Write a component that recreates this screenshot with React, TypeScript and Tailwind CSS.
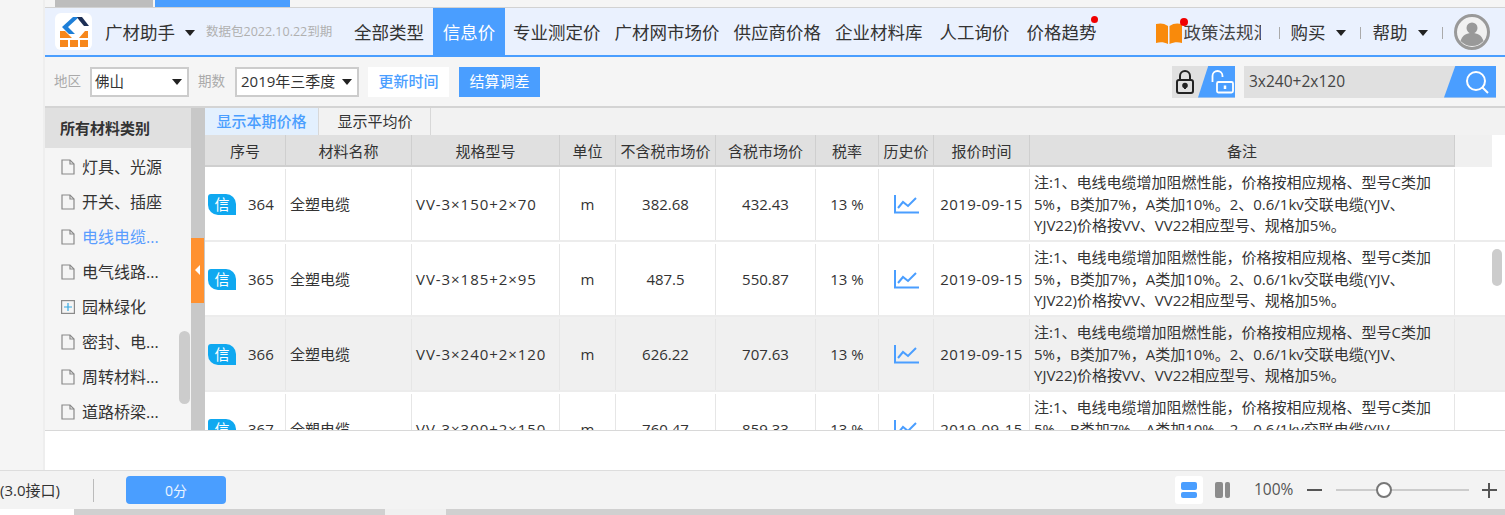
import React from 'react';

const columns = [
  { label: '序号', w: 'w-[81px]' },
  { label: '材料名称', w: 'w-[126px]' },
  { label: '规格型号', w: 'w-[148px]' },
  { label: '单位', w: 'w-[56px]' },
  { label: '不含税市场价', w: 'w-[100px]' },
  { label: '含税市场价', w: 'w-[100px]' },
  { label: '税率', w: 'w-[63px]' },
  { label: '历史价', w: 'w-[55px]' },
  { label: '报价时间', w: 'w-[96px]' },
  { label: '备注', w: 'w-[425px]' },
];

const rows = [
  { no: 364, spec: 'VV-3×150+2×70', price: '382.68', taxed: '432.43', bg: 'bg-white' },
  { no: 365, spec: 'VV-3×185+2×95', price: '487.5', taxed: '550.87', bg: 'bg-white' },
  { no: 366, spec: 'VV-3×240+2×120', price: '626.22', taxed: '707.63', bg: 'bg-[#f0f0f0]' },
  { no: 367, spec: 'VV-3×300+2×150', price: '760.47', taxed: '859.33', bg: 'bg-white' },
];

const navItems = ['专业测定价', '广材网市场价', '供应商价格', '企业材料库'];

const categories = ['灯具、光源', '开关、插座', '电线电缆...', '电气线路...', '园林绿化', '密封、电...', '周转材料...', '道路桥梁...'];

const Caret = () => <span className="block h-0 w-0 border-x-[5px] border-t-[6px] border-x-transparent border-t-[#222]" />;

const FileIcon = () => (
  <svg width="14" height="16" viewBox="0 0 14 16" fill="none" stroke="#8a8a8a" strokeWidth="1.2">
    <path d="M1 1h8l4 4v10H1z" />
    <path d="M9 1v4h4" />
  </svg>
);

const PlusBox = () => (
  <svg width="14" height="14" viewBox="0 0 14 14" fill="none">
    <rect x="0.6" y="0.6" width="12.8" height="12.8" stroke="#8a8a8a" strokeWidth="1.2" />
    <path d="M7 3v8M3 7h8" stroke="#36a9e1" strokeWidth="1.2" />
  </svg>
);

const Logo = () => (
  <div className="-mt-[2px] h-[37px] w-[37px] shrink-0 rounded-md bg-white">
    <svg width="37" height="37" viewBox="0 0 37 37">
      <path d="M7 14 18 4h6L13 14l7 7h-6z" fill="#1e7fd8" />
      <path d="M22 4h5l7 9h-5l-5-6z" fill="#1d2f55" />
      <path d="M5 18h5l7 7H5zM24 25l6-7h3v7z" fill="#f7871a" />
      <path d="M5 27h8v7H5zM15 27h8v7h-8zM25 27h8v7h-8z" fill="#f7871a" />
    </svg>
  </div>
);

const BookIcon = () => (
  <svg width="26" height="23" viewBox="0 0 26 23">
    <path d="M0 3c4-1 8-1 12 2v18c-4-2-8-2-12-1z" fill="#f98a0b" />
    <path d="M13.500 5c4-3 8-3 12.500-2v19c-4-1-8-1-12.500 1z" fill="#f98a0b" />
  </svg>
);

const Avatar = () => (
  <svg width="36" height="36" viewBox="0 0 36 36">
    <circle cx="18" cy="18" r="16.500" fill="#f1f1f1" stroke="#999" strokeWidth="3" />
    <circle cx="18" cy="14" r="5.500" fill="#999" />
    <path d="M6.500 27c2-6 6-8 11.500-8s9.500 2 11.500 8c-3 3-7 5-11.500 5s-8.500-2-11.500-5z" fill="#999" />
  </svg>
);

const LockIcon = ({ open }: { open?: boolean }) =>
  open ? (
    <svg width="24" height="26" viewBox="0 0 24 26" fill="none" stroke="#fff" strokeWidth="1.8">
      <path d="M2.500 14V8a5 5 0 0 1 10 0v1" />
      <rect x="7" y="14" width="16" height="10.500" rx="1.500" />
      <path d="M15 17.500v3.500" strokeWidth="2.500" />
    </svg>
  ) : (
    <svg width="18" height="24" viewBox="0 0 18 24" fill="none" stroke="#222" strokeWidth="2">
      <path d="M4 10V6a5 5 0 0 1 10 0v4" />
      <rect x="1" y="10" width="16" height="13" rx="2" />
      <circle cx="9" cy="15.500" r="1.800" fill="#222" />
      <path d="M9 16v3" />
    </svg>
  );

const ChartIcon = () => (
  <svg width="25" height="19" viewBox="0 0 25 19" fill="none" stroke="#4a9eff">
    <path d="M1 0v17.500h24" strokeWidth="2" />
    <path d="M4 13l5-6 5 4 8-8" strokeWidth="2" />
  </svg>
);

const TableRow = ({ no, spec, price, taxed, bg }: (typeof rows)[number]) => (
  <div className={`flex h-[75px] shrink-0 border-b-2 border-[#ececec] pt-[2px] ${bg}`}>
    <div className="flex w-[81px] items-center border-r border-[#e6e6e6] pl-[3px]">
      <span className="flex h-[21px] w-[28px] items-center justify-center rounded-tl-[3px] rounded-tr-[10px] rounded-bl-[10px] bg-[#0fa8f0] text-[15px] text-white">信</span>
      <span className="ml-[12px]">{no}</span>
    </div>
    <div className="flex w-[126px] items-center border-r border-[#e6e6e6] pl-[4px]">全塑电缆</div>
    <div className="flex w-[148px] items-center border-r border-[#e6e6e6] pl-[4px] tracking-[0.95px]">{spec}</div>
    <div className="flex w-[56px] items-center justify-center border-r border-[#e6e6e6]">m</div>
    <div className="flex w-[100px] items-center justify-center border-r border-[#e6e6e6]">{price}</div>
    <div className="flex w-[100px] items-center justify-center border-r border-[#e6e6e6]">{taxed}</div>
    <div className="flex w-[63px] items-center justify-center border-r border-[#e6e6e6]">13 %</div>
    <div className="flex w-[55px] items-center justify-center border-r border-[#e6e6e6]"><ChartIcon /></div>
    <div className="flex w-[96px] items-center justify-center border-r border-[#e6e6e6] tracking-[0.4px]">2019-09-15</div>
    <div className="flex w-[425px] flex-col justify-center border-r border-[#e6e6e6] pl-[4px] leading-[21.500px] whitespace-nowrap">
      <span>注:1、电线电缆增加阻燃性能，价格按相应规格、型号C类加</span>
      <span>5%，B类加7%，A类加10%。2、0.6/1kv交联电缆(YJV、</span>
      <span>YJV22)价格按VV、VV22相应型号、规格加5%。</span>
    </div>
  </div>
);

export default function App() {
  return (
    <div className="relative flex h-[515px] w-[1505px] flex-col overflow-hidden bg-white font-['Open_Sans','Noto_Sans_CJK_SC',sans-serif] text-[15px] text-[#333]">
      <div className="flex h-[470px] shrink-0">
        <div className="w-[45px] shrink-0 border-r-2 border-[#eeeeee] bg-[#f5f5f5]" />
        <div className="flex min-w-0 flex-1 flex-col">
          {/* window tabs */}
          <div className="flex h-[8px] shrink-0 gap-[2px] border-b border-[#d2d2d2] bg-[#f5f5f5] pl-[10px]">
            <div className="h-[7px] w-[98px] bg-[#bdbdbd]" />
            <div className="h-[7px] w-[135px] bg-[#4a9eff]" />
          </div>

          {/* nav */}
          <div className="flex h-[49px] shrink-0 items-center border-b-2 border-[#4a9eff] bg-[#eaf1fe] pt-[2px] pl-[10px] text-[17.500px] whitespace-nowrap">
            <Logo />
            <span className="ml-[13px]">广材助手</span>
            <span className="ml-[10px]"><Caret /></span>
            <span className="ml-[11px] w-[148px] text-[12.500px] text-[#b0b0b0]">数据包2022.10.22到期</span>
            <span className="w-[79px]">全部类型</span>
            <span className="-mt-[2px] flex w-[72px] items-center justify-center self-stretch bg-[#4a9eff] pt-[2px] text-white">信息价</span>
            <div className="ml-[8px] flex gap-[14px]">
              {navItems.map((n) => <span key={n}>{n}</span>)}
            </div>
            <span className="ml-[17px]">人工询价</span>
            <span className="relative ml-[17px]">
              价格趋势
              <span className="absolute -top-[3px] -right-[1px] h-[7px] w-[7px] rounded-full bg-[#f00000]" />
            </span>
            <span className="relative ml-[59px] flex items-center">
              <BookIcon />
              <span className="absolute top-[-1px] left-[24px] h-[8px] w-[8px] rounded-full bg-[#f00000]" />
              <span className="ml-[2px] w-[77px] overflow-hidden text-[#444]">政策法规汇编</span>
            </span>
            <span className="ml-[18px] h-[12px] w-px bg-[#aaa]" />
            <span className="ml-[11px]">购买</span>
            <span className="ml-[10px]"><Caret /></span>
            <span className="ml-[14px] h-[12px] w-px bg-[#aaa]" />
            <span className="ml-[12px]">帮助</span>
            <span className="ml-[10px]"><Caret /></span>
            <span className="ml-[14px] h-[12px] w-px bg-[#aaa]" />
            <span className="-mt-[2px] ml-[11px]"><Avatar /></span>
          </div>

          {/* filters */}
          <div className="flex h-[51px] shrink-0 items-center border-b-2 border-[#d4d4d4] bg-[#f5f5f5] pl-[9px]">
            <span className="w-[36px] text-[13.500px] text-[#aaa]">地区</span>
            <div className="flex h-[30px] w-[99px] items-center justify-between border-2 border-[#cccccc] bg-white pr-[2px] pl-[3px] text-[14.500px]">
              佛山
              <span className="mr-[3px]"><Caret /></span>
            </div>
            <span className="ml-[9px] w-[37px] text-[13.500px] text-[#aaa]">期数</span>
            <div className="flex h-[30px] w-[124px] items-center justify-between border-2 border-[#cccccc] bg-white pr-[2px] pl-[4px] whitespace-nowrap">
              2019年三季度
              <span className="mr-[3px]"><Caret /></span>
            </div>
            <button className="ml-[9px] h-[30px] w-[81px] bg-white font-medium text-[#4a9eff]">更新时间</button>
            <button className="ml-[10px] h-[30px] w-[81px] bg-[#4a9eff] text-white">结算调差</button>

            <div className="relative ml-[632px] flex h-[32px] w-[63px] items-center overflow-hidden bg-[#e0e0e0] pl-[4px]">
              <LockIcon />
              <span className="absolute top-0 right-0 h-full w-[37px] bg-[#4a9eff] [clip-path:polygon(28%_0,100%_0,100%_100%,0_100%)]" />
              <span className="absolute top-[2px] right-[1px]"><LockIcon open /></span>
            </div>
            <div className="relative ml-[9px] flex h-[32px] w-[252px] items-center overflow-hidden bg-[#e0e0e0] pl-[5px] text-[15.500px] text-[#444]">
              3x240+2x120
              <span className="absolute top-0 right-0 flex h-full w-[52px] items-center justify-end bg-[#4a9eff] pr-[7px] [clip-path:polygon(22%_0,100%_0,100%_100%,0_100%)]">
                <svg width="24" height="24" viewBox="0 0 24 24" fill="none" stroke="#fff" strokeWidth="2">
                  <circle cx="11" cy="11" r="9" />
                  <path d="M17.500 17.500 23 23" />
                </svg>
              </span>
            </div>
          </div>

          {/* body */}
          <div className="flex h-[323px] shrink-0 border-b border-[#d8d8d8]">
            <div className="relative w-[146px] shrink-0 overflow-hidden bg-[#f5f5f5]">
              <div className="flex h-[40px] items-center bg-[#e0e0e0] pl-[15px] font-semibold">所有材料类别</div>
              <div className="pt-[1px] pl-[16px] text-[16px]">
                {categories.map((c) => (
                  <div key={c} className={`flex h-[35px] items-center gap-[7px] ${c === '电线电缆...' ? 'text-[#5a9dff]' : ''}`}>
                    {c === '园林绿化' ? <PlusBox /> : <FileIcon />}
                    {c}
                  </div>
                ))}
              </div>
              <span className="absolute top-[223px] right-[1px] h-[73px] w-[11px] rounded-full bg-[#cccccc]" />
            </div>

            <div className="relative flex w-[14px] shrink-0 items-center bg-[#c8c8c8]">
              <span className="mt-[2px] flex h-[65px] w-[13px] items-center justify-center bg-[#ff9130]">
                <span className="h-0 w-0 border-y-[5px] border-r-[5px] border-y-transparent border-r-white" />
              </span>
            </div>

            <div className="flex min-w-0 flex-1 flex-col bg-white">
              <div className="flex h-[27px] shrink-0 bg-[#f2f2f2]">
                <span className="flex w-[113px] items-center justify-center bg-[#e3f0fe] font-medium text-[#4a9eff]">显示本期价格</span>
                <span className="flex w-[113px] items-center justify-center border-x border-[#d8d8d8] pl-px">显示平均价</span>
              </div>
              <div className="flex h-[32px] shrink-0">
                {columns.map((c) => (
                  <span key={c.label} className={`flex items-center justify-center border-r border-b-2 border-[#cfcfcf] bg-[#e0e0e0] pt-[3px] whitespace-nowrap ${c.w}`}>
                    {c.label}
                  </span>
                ))}
                <span className="w-[37px] border-b-2 border-[#f0f0f0] bg-[#f0f0f0]" />
              </div>
              <div className="flex-1 overflow-hidden">
                {rows.map((r) => <TableRow key={r.no} {...r} />)}
              </div>
            </div>
          </div>
          <div className="flex-1 bg-white" />
        </div>
      </div>

      {/* footer */}
      <div className="flex h-[39px] shrink-0 items-center border-t border-[#dddddd] bg-[#f3f3f3]">
        <span className="w-[93px] whitespace-nowrap">(3.0接口)</span>
        <span className="h-[23px] w-px bg-[#bbb]" />
        <button className="ml-[32px] h-[28px] w-[100px] rounded-[4px] bg-[#4a9eff] text-[14px] text-white/90">0分</button>
        <div className="ml-[949px] flex h-[28px] w-[28px] flex-col items-center justify-center gap-[2px] rounded-[3px] bg-white">
          <span className="h-[8px] w-[16px] rounded-[2px] bg-[#4a9eff]" />
          <span className="h-[6px] w-[16px] rounded-[2px] bg-[#4a9eff]" />
        </div>
        <div className="ml-[12px] flex gap-[2px]">
          <span className="h-[16px] w-[8px] rounded-[2px] bg-[#8c8c8c]" />
          <span className="h-[16px] w-[5px] rounded-[2px] bg-[#8c8c8c]" />
        </div>
        <span className="ml-[24px] w-[39px] text-[15.500px] whitespace-nowrap text-[#555]">100%</span>
        <span className="ml-[14px] h-[2px] w-[15px] bg-[#555]" />
        <div className="relative ml-[14px] h-[2px] w-[133px] bg-[#cccccc]">
          <span className="absolute -top-[7px] left-[40px] h-[16px] w-[16px] rounded-full border-2 border-[#777] bg-white" />
        </div>
        <span className="relative ml-[13px] h-[15px] w-[15px]">
          <span className="absolute top-[6px] left-0 h-[2px] w-[15px] bg-[#555]" />
          <span className="absolute top-0 left-[6px] h-[15px] w-[2px] bg-[#555]" />
        </span>
      </div>

      {/* page scroll strip */}
      <div className="flex h-[6px] shrink-0 bg-[#d0d0d0]">
        <span className="w-[74px] bg-white" />
        <span className="ml-[311px] w-[61px] bg-[#f0f0f0]" />
      </div>

      {/* table scrollbar */}
      <span className="absolute top-[249px] left-[1492px] h-[37px] w-[10px] rounded-full bg-[#cccccc]" />
    </div>
  );
}
